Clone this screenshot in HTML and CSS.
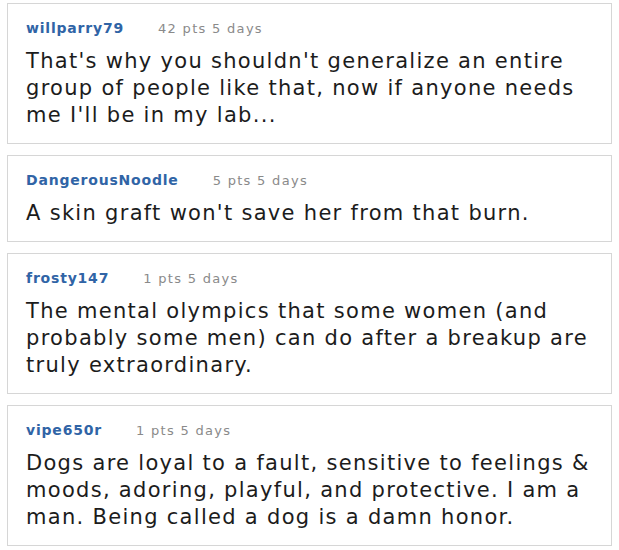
FILE: index.html
```html
<!DOCTYPE html>
<html>
<head>
<meta charset="utf-8">
<link rel="stylesheet" href="styles.css">
</head>
<body>
<div class="list">
  <div class="card">
    <div class="meta"><span class="user">willparry79</span><span class="info">42 pts 5 days</span></div>
    <div class="text">That's why you shouldn't generalize an entire group of people like that, now if anyone needs me I'll be in my lab...</div>
  </div>
  <div class="card">
    <div class="meta"><span class="user">DangerousNoodle</span><span class="info">5 pts 5 days</span></div>
    <div class="text">A skin graft won't save her from that burn.</div>
  </div>
  <div class="card">
    <div class="meta"><span class="user">frosty147</span><span class="info">1 pts 5 days</span></div>
    <div class="text">The mental olympics that some women (and probably some men) can do after a breakup are truly extraordinary.</div>
  </div>
  <div class="card">
    <div class="meta"><span class="user">vipe650r</span><span class="info">1 pts 5 days</span></div>
    <div class="text">Dogs are loyal to a fault, sensitive to feelings &amp; moods, adoring, playful, and protective. I am a man. Being called a dog is a damn honor.</div>
  </div>
</div>
</body>
</html>
```
FILE: styles.css
```css
html, body {
  margin: 0;
  padding: 0;
  background: #ffffff;
}
body {
  font-family: "DejaVu Sans", Verdana, sans-serif;
}
.list {
  display: flex;
  flex-direction: column;
  gap: 11px;
  padding: 3px 7px 0 7px;
}
.card {
  border: 1px solid #d6d6d6;
  padding: 14px 14px 14px 18px;
  background: #fff;
}
.meta {
  display: flex;
  align-items: baseline;
  gap: 34px;
  line-height: 20px;
}
.user {
  font-weight: bold;
  font-size: 14px;
  letter-spacing: 0.8px;
  color: #3064a6;
}
.info {
  font-size: 13px;
  letter-spacing: 1.3px;
  color: #8a8a8a;
}
.text {
  margin-top: 9px;
  font-size: 21px;
  letter-spacing: 1.3px;
  line-height: 27px;
  color: #1c1c1c;
}
```
